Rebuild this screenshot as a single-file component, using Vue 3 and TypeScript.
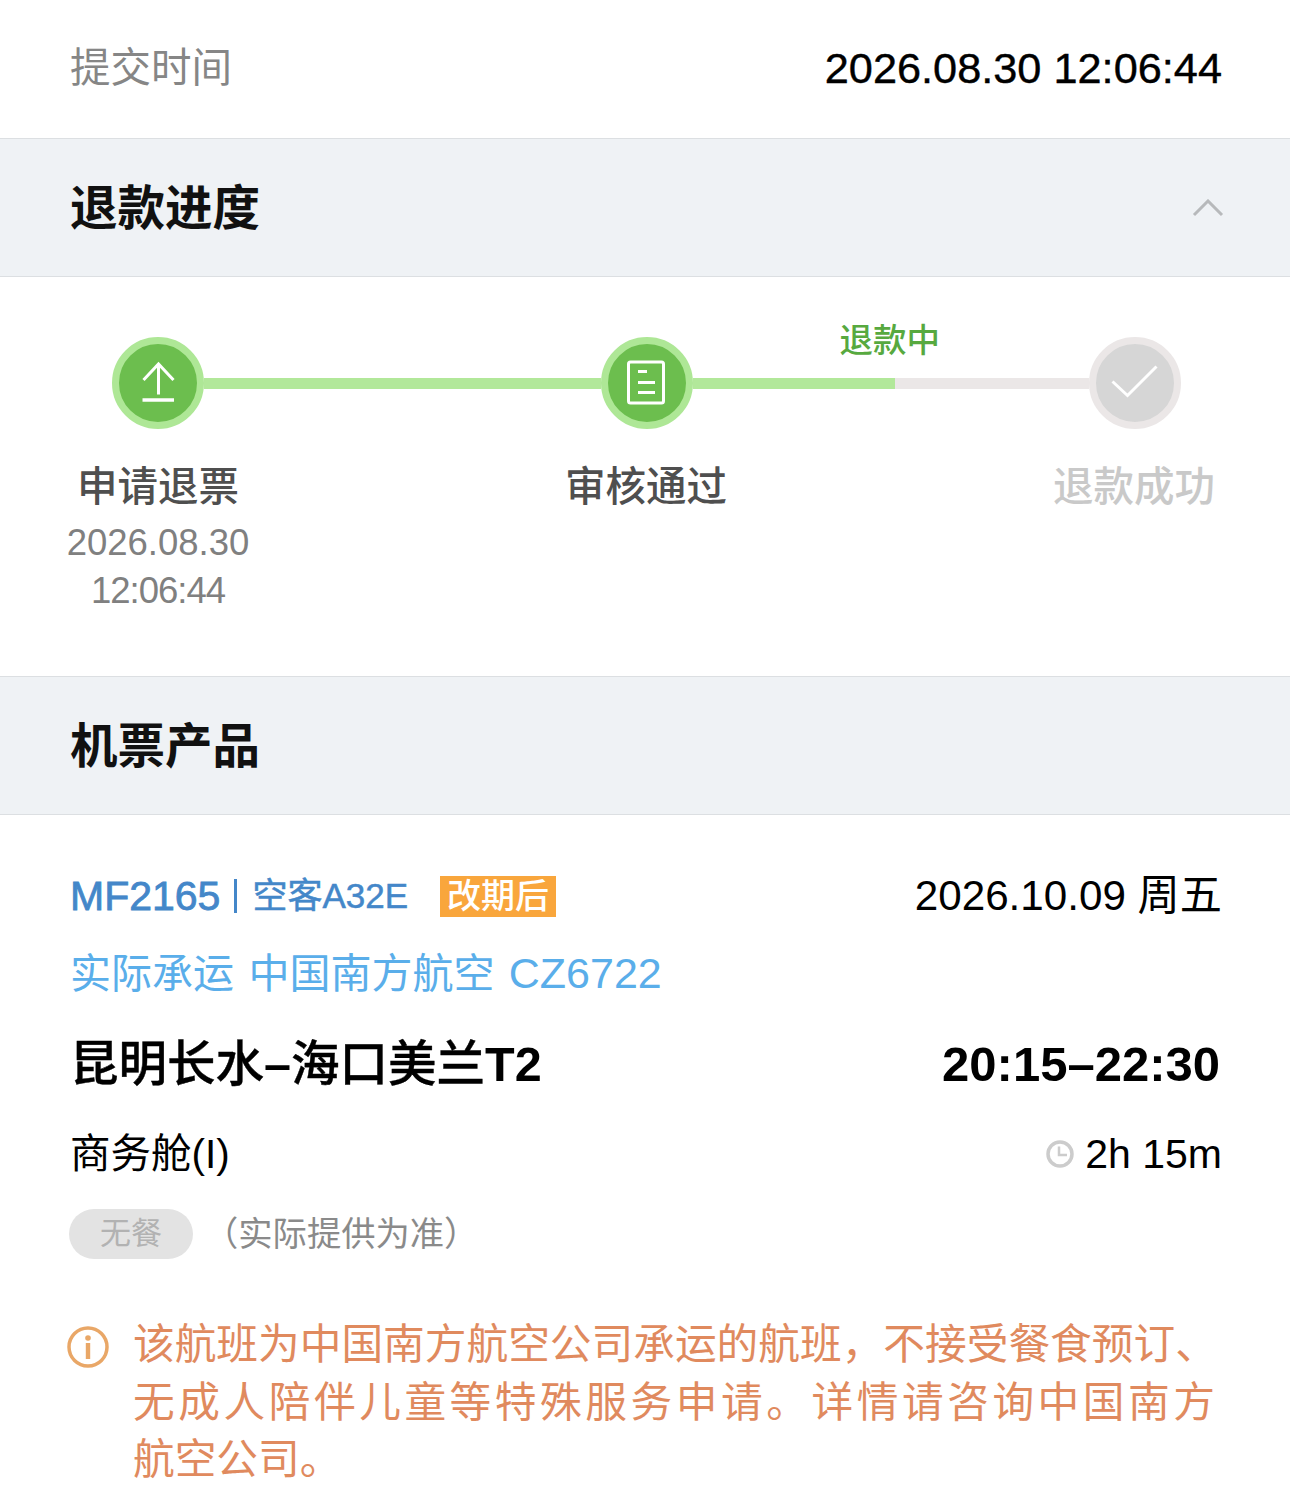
<script setup lang="ts">
import { ref } from 'vue'

type Step = { label: string; date?: string; time?: string; done: boolean; icon: string }

const steps: Step[] = [
  { label: '申请退票', date: '2026.08.30', time: '12:06:44', done: true, icon: 'upload' },
  { label: '审核通过', done: true, icon: 'doc' },
  { label: '退款成功', done: false, icon: 'check' },
]

// 第二段进度条的完成比例
const progress = ref(51)

const notice = [
  '该航班为中国南方航空公司承运的航班，不接受餐食预订、',
  '无成人陪伴儿童等特殊服务申请。详情请咨询中国南方',
  '航空公司。',
]
</script>

<template>
  <div class="page">
    <div class="submit-row">
      <span class="submit-label">提交时间</span>
      <span class="submit-time">2026.08.30 12:06:44</span>
    </div>

    <div class="section-head">
      <span class="section-title">退款进度</span>
      <svg class="chevron" width="32" height="18" viewBox="0 0 32 18">
        <path d="M2 16 L16 2 L30 16" fill="none" stroke="#b7b9bb" stroke-width="3" />
      </svg>
    </div>

    <div class="progress">
      <div class="track">
        <template v-for="(s, i) in steps" :key="s.label">
          <div class="node" :class="{ off: !s.done }">
            <svg v-if="s.icon === 'upload'" width="78" height="78" viewBox="0 0 78 78">
              <path d="M39.500 20 V50.500 M24.500 36 L39.500 20 L54.500 36" fill="none" stroke="#fff" stroke-width="3" />
              <path d="M23.500 56 H55" fill="none" stroke="#fff" stroke-width="3.500" />
            </svg>
            <svg v-else-if="s.icon === 'doc'" width="78" height="78" viewBox="0 0 78 78">
              <rect x="20.500" y="18" width="35" height="41" rx="2" fill="none" stroke="#fff" stroke-width="3" />
              <path d="M30 27.500 H39 M30 38.500 H47 M30 48.500 H47" fill="none" stroke="#fff" stroke-width="3" />
            </svg>
            <svg v-else width="78" height="78" viewBox="0 0 78 78">
              <path d="M16.500 37.500 L31.500 51.500 L60.500 22.500" fill="none" stroke="#fff" stroke-width="3" />
            </svg>
          </div>
          <div v-if="i === 0" class="link done"></div>
          <div v-if="i === 1" class="link">
            <div class="link-fill" :style="{ width: progress + '%' }"></div>
            <span class="link-tip">退款中</span>
          </div>
        </template>
      </div>
      <div class="step-texts">
        <div v-for="s in steps" :key="s.label" class="step-text">
          <div class="step-label" :class="{ off: !s.done }">{{ s.label }}</div>
          <div v-if="s.date" class="step-date">{{ s.date }}</div>
          <div v-if="s.time" class="step-date tight">{{ s.time }}</div>
        </div>
      </div>
    </div>

    <div class="section-head">
      <span class="section-title">机票产品</span>
    </div>

    <div class="flight">
      <div class="line-top">
        <div class="flight-no">
          <span class="code">MF2165</span>
          <i class="sep"></i>
          <span class="plane">空客A32E</span>
          <span class="tag">改期后</span>
        </div>
        <span class="flight-date">2026.10.09 周五</span>
      </div>
      <div class="carrier">实际承运 中国南方航空 <span class="carrier-no">CZ6722</span></div>
      <div class="line-route">
        <span class="route">昆明长水<b>–</b>海口美兰<b>T2</b></span>
        <span class="times">20:15–22:30</span>
      </div>
      <div class="line-cabin">
        <span class="cabin">商务舱(I)</span>
        <span class="duration">
          <svg width="30" height="30" viewBox="0 0 30 30">
            <circle cx="15" cy="15" r="12" fill="none" stroke="#cccccc" stroke-width="3.500" />
            <path d="M14 7.500 V16 H22" fill="none" stroke="#cccccc" stroke-width="2.500" />
          </svg>
          2h 15m
        </span>
      </div>
      <div class="line-meal">
        <span class="meal">无餐</span>
        <span class="meal-note">（实际提供为准）</span>
      </div>
      <div class="notice">
        <svg class="info" width="44" height="44" viewBox="0 0 44 44">
          <circle cx="22" cy="22" r="19" fill="none" stroke="#e9a767" stroke-width="3.500" />
          <circle cx="22" cy="13" r="2.800" fill="#e9a767" />
          <rect x="19.800" y="18" width="4.400" height="16" fill="#e9a767" />
        </svg>
        <div class="notice-text">
          <div v-for="(l, i) in notice" :key="i" :class="{ spread: i === 1 }">{{ l }}</div>
        </div>
      </div>
    </div>
  </div>
</template>

<style>
html,
body {
  margin: 0;
  background: #fff;
}
</style>

<style scoped>
.page {
  width: 1290px;
  height: 1499px;
  overflow: hidden;
  background: #fff;
  font-family: 'Liberation Sans', 'Noto Sans CJK SC', sans-serif;
  color: #000;
}

.submit-row {
  height: 138px;
  box-sizing: border-box;
  padding: 0 68px 3px 70px;
  display: flex;
  justify-content: space-between;
  align-items: center;
  line-height: 60px;
}
.submit-label {
  font-size: 40.500px;
  color: #868686;
}
.submit-time {
  font-size: 43.300px;
  -webkit-text-stroke: 0.400px #000;
}

.section-head {
  height: 139px;
  box-sizing: border-box;
  padding: 0 66px 0 70px;
  display: flex;
  justify-content: space-between;
  align-items: center;
  background: #eff2f5;
  border-top: 1px solid #dcdfe2;
  border-bottom: 1px solid #dcdfe2;
}
.section-title {
  font-size: 47.500px;
  font-weight: 700;
  line-height: 60px;
  padding-top: 3px;
  color: #111;
}

/* 进度条 */
.progress {
  height: 399px;
  box-sizing: border-box;
  padding-top: 60px;
}
.track {
  display: flex;
  align-items: center;
  padding: 0 109px 0 112px;
}
.node {
  width: 78px;
  height: 78px;
  flex: none;
  border-radius: 50%;
  background: #6cbe4e;
  border: 7.500px solid #aee796;
}
.node svg {
  display: block;
}
.node.off {
  background: #d6d6d6;
  border-color: #ebe7e7;
}
.link {
  flex: 1;
  height: 11px;
  position: relative;
  background: #ebe7e7;
}
.link.done,
.link-fill {
  background: #b2e89a;
}
.link-fill {
  height: 100%;
}
.link-tip {
  position: absolute;
  left: 147px;
  top: -61px;
  font-size: 33.500px;
  font-weight: 500;
  line-height: 48px;
  color: #57a93f;
}
.step-texts {
  display: flex;
  justify-content: space-between;
  padding: 0 56px 0 58px;
  margin-top: 28px;
}
.step-text {
  width: 200px;
  text-align: center;
}
.step-label {
  font-size: 40.500px;
  font-weight: 500;
  line-height: 60px;
  margin-bottom: 2px;
  color: #4f4f4f;
}
.step-label.off {
  color: #c9c9c9;
}
.step-date {
  font-size: 36.500px;
  line-height: 48px;
  color: #808080;
}
.step-date.tight {
  letter-spacing: -1px;
}

/* 航班信息 */
.flight {
  padding: 50px 68px 0 70px;
}
.line-top {
  height: 62px;
  line-height: 62px;
  display: flex;
  justify-content: space-between;
  align-items: center;
}
.flight-no {
  display: flex;
  align-items: center;
}
.code {
  font-size: 41px;
  color: #4487c9;
  -webkit-text-stroke: 0.800px #4487c9;
}
.sep {
  width: 3px;
  height: 34px;
  margin: 0 15px 0 14px;
  background: #4487c9;
}
.plane {
  font-size: 35px;
  color: #4487c9;
  -webkit-text-stroke: 0.500px #4487c9;
}
.tag {
  margin-left: 32px;
  padding: 0 7px;
  height: 41px;
  line-height: 41px;
  font-size: 34px;
  font-weight: 500;
  color: #fff;
  background: #f9a63c;
}
.flight-date {
  font-size: 42.200px;
}
.carrier {
  margin-top: 16px;
  font-size: 41px;
  line-height: 60px;
  word-spacing: 3px;
  color: #5aaeea;
}
.carrier-no {
  font-size: 43px;
}
.line-route {
  margin-top: 30px;
  display: flex;
  justify-content: space-between;
  align-items: center;
  height: 60px;
  line-height: 60px;
}
.route {
  font-size: 48.500px;
  font-weight: 500;
  -webkit-text-stroke: 0.400px #000;
}
.route b {
  -webkit-text-stroke: 0;
}
.times {
  font-size: 49px;
  font-weight: 700;
  padding-right: 2px;
}
.line-cabin {
  margin-top: 30px;
  display: flex;
  justify-content: space-between;
  align-items: center;
  height: 60px;
  line-height: 60px;
  font-size: 41px;
}
.cabin {
  font-size: 40.500px;
}
.duration {
  display: flex;
  align-items: center;
  gap: 10px;
}
.line-meal {
  margin-top: 25px;
  display: flex;
  align-items: center;
  line-height: 50px;
}
.meal {
  width: 124px;
  height: 50px;
  margin-left: -1px;
  border-radius: 25px;
  background: #e3e3e3;
  color: #b2b2b2;
  font-size: 31px;
  text-align: center;
}
.meal-note {
  margin-left: 11px;
  font-size: 34.300px;
  color: #8a8a8a;
}
.notice {
  margin-top: 57px;
  display: flex;
  gap: 23px;
}
.info {
  flex: none;
  margin: 9px 0 0 -4px;
}
.notice-text {
  width: 1082px;
  font-size: 41.700px;
  line-height: 57.500px;
  color: #e08a5e;
  white-space: nowrap;
}
.spread {
  text-align: justify;
  text-align-last: justify;
  white-space: normal;
}
</style>
